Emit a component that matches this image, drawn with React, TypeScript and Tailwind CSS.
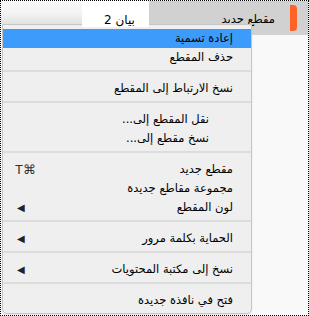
const menu = [
  { type: "item", label: "إعادة تسمية", active: true },
  { type: "item", label: "حذف المقطع" },
  { type: "sep" },
  { type: "item", label: "نسخ الارتباط إلى المقطع" },
  { type: "sep" },
  { type: "item", label: "نقل المقطع إلى...", indent: true },
  { type: "item", label: "نسخ مقطع إلى...", indent: true },
  { type: "sep" },
  { type: "item", label: "مقطع جديد", shortcut: "T⌘" },
  { type: "item", label: "مجموعة مقاطع جديدة" },
  { type: "item", label: "لون المقطع", submenu: true },
  { type: "sep" },
  { type: "item", label: "الحماية بكلمة مرور", submenu: true },
  { type: "sep" },
  { type: "item", label: "نسخ إلى مكتبة المحتويات", submenu: true },
  { type: "sep" },
  { type: "item", label: "فتح في نافذة جديدة" },
]

type Entry = {
  type: string
  label?: string
  active?: boolean
  indent?: boolean
  shortcut?: string
  submenu?: boolean
}

export default function App() {
  return (
    <div className="relative h-[316px] w-[309px] overflow-hidden border border-dotted border-black bg-[#f9f9f9] font-['DejaVu_Sans',sans-serif] text-black">
      {/* tab strip */}
      <div className="flex items-start">
        <div className="h-[23px] flex-1 bg-[linear-gradient(180deg,#f8f8f8_0%,#f3f3f3_55%,#e2e2e2_100%)]" />
        <div className="relative z-20 flex h-[26px] w-[67px] items-end justify-center bg-white pb-[1px] pl-[8px] text-[12px] leading-none" dir="rtl">
          بيان 2
        </div>
        <div className="flex h-[34px] w-[159px] items-center justify-end bg-[#d1d1d1] pt-[4px]" dir="ltr">
          <span className="text-[11.5px] leading-none" dir="rtl">مقطع جديد</span>
          <span className="-mt-[4px] ml-[15px] mr-[11px] h-[26px] w-[7px] rounded-r-[4px] bg-[#ff6227]" />
        </div>
      </div>

      {/* context menu */}
      <div
        className="absolute left-[1px] top-[23px] z-10 w-[250px] rounded-b-[5px] border border-[#c6c6c6] bg-[#efefef] pb-[3px] pt-[4px] shadow-[0_1px_2px_rgba(0,0,0,0.08)]"
        dir="rtl"
      >
        {(menu as Entry[]).map((entry, i) =>
          entry.type === "sep" ? (
            <div key={i} className="mb-[7px] mt-[3px] h-[2px] bg-[#dcdcdc]" />
          ) : (
            <MenuRow key={i} entry={entry} />
          ),
        )}
      </div>
    </div>
  )
}

function MenuRow({ entry }: { entry: Entry }) {
  return (
    <div
      className={`flex h-[19px] items-center justify-between text-[11.5px] leading-none ${
        entry.active ? "bg-[#3d9bfb]" : ""
      } ${entry.indent ? "pr-[42px]" : "pr-[18px]"} pl-[12px]`}
    >
      <span>{entry.label}</span>
      {entry.shortcut && (
        <span dir="ltr" className="font-['Liberation_Sans',sans-serif] text-[13px] text-[#333]">
          {entry.shortcut}
        </span>
      )}
      {entry.submenu && <span className="pl-[2px] text-[10px] text-[#222]">◀</span>}
    </div>
  )
}
